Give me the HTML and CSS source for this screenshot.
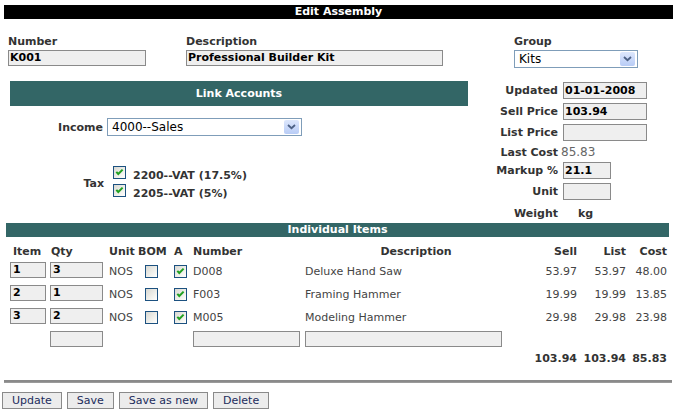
FILE: index.html
```html
<!DOCTYPE html>
<html>
<head>
<meta charset="utf-8">
<title>Edit Assembly</title>
<link rel="stylesheet" href="styles.css">
</head>
<body>
<div class="page">
  <div class="titlebar">Edit Assembly</div>

  <div class="head">
    <div class="field f-number">
      <div class="flabel">Number</div>
      <div class="box w-number">K001</div>
    </div>
    <div class="field f-desc">
      <div class="flabel">Description</div>
      <div class="box w-desc">Professional Builder Kit</div>
    </div>
    <div class="field f-group">
      <div class="flabel">Group</div>
      <div class="select w-group"><span>Kits</span><span class="arrow"><svg width="9" height="6" viewBox="0 0 9 6"><path d="M1 1l3.5 3.2L8 1" fill="none" stroke="#4d6185" stroke-width="1.8"/></svg></span></div>
    </div>
  </div>

  <div class="mid">
    <div class="left">
      <div class="bar">Link Accounts</div>
      <div class="income">
        <div class="lbl">Income</div>
        <div class="select w-income"><span>4000--Sales</span><span class="arrow"><svg width="9" height="6" viewBox="0 0 9 6"><path d="M1 1l3.5 3.2L8 1" fill="none" stroke="#4d6185" stroke-width="1.8"/></svg></span></div>
      </div>
      <div class="tax">
        <div class="lbl">Tax</div>
        <div class="tax-list">
          <div class="tax-line"><span class="cb"><svg width="11" height="11" viewBox="0 0 11 11"><path d="M2.3 4.8l2 2.2L8.6 2.6" fill="none" stroke="#21a121" stroke-width="2"/></svg></span><span class="tax-text">2200--VAT (17.5%)</span></div>
          <div class="tax-line"><span class="cb"><svg width="11" height="11" viewBox="0 0 11 11"><path d="M2.3 4.8l2 2.2L8.6 2.6" fill="none" stroke="#21a121" stroke-width="2"/></svg></span><span class="tax-text">2205--VAT (5%)</span></div>
        </div>
      </div>
    </div>

    <div class="right">
      <div class="rl">Updated</div><div class="rv"><div class="box rbox">01-01-2008</div></div>
      <div class="rl">Sell Price</div><div class="rv"><div class="box rbox">103.94</div></div>
      <div class="rl">List Price</div><div class="rv"><div class="box rbox"></div></div>
      <div class="rl rl-short">Last Cost</div><div class="rv rv-text">85.83</div>
      <div class="rl">Markup %</div><div class="rv"><div class="box rbox-s">21.1</div></div>
      <div class="rl">Unit</div><div class="rv"><div class="box rbox-s"></div></div>
      <div class="rl rl-w">Weight</div><div class="rv rv-w">kg</div>
    </div>
  </div>

  <div class="items">
    <div class="bar2">Individual Items</div>
    <div class="grid hrow">
      <div class="h-item">Item</div>
      <div class="h-qty">Qty</div>
      <div class="h-unit">Unit</div>
      <div class="h-bom">BOM</div>
      <div class="h-a">A</div>
      <div>Number</div>
      <div class="center">Description</div>
      <div class="num">Sell</div>
      <div class="num">List</div>
      <div class="num">Cost</div>
    </div>

    <div class="grid row">
      <div><div class="box ib-item">1</div></div>
      <div><div class="box ib-qty">3</div></div>
      <div class="t t-unit">NOS</div>
      <div class="cbcell"><span class="cb"></span></div>
      <div class="cbcell-a"><span class="cb"><svg width="11" height="11" viewBox="0 0 11 11"><path d="M2.3 4.8l2 2.2L8.6 2.6" fill="none" stroke="#21a121" stroke-width="2"/></svg></span></div>
      <div class="t">D008</div>
      <div class="t">Deluxe Hand Saw</div>
      <div class="t num">53.97</div>
      <div class="t num">53.97</div>
      <div class="t num">48.00</div>
    </div>

    <div class="grid row">
      <div><div class="box ib-item">2</div></div>
      <div><div class="box ib-qty">1</div></div>
      <div class="t t-unit">NOS</div>
      <div class="cbcell"><span class="cb"></span></div>
      <div class="cbcell-a"><span class="cb"><svg width="11" height="11" viewBox="0 0 11 11"><path d="M2.3 4.8l2 2.2L8.6 2.6" fill="none" stroke="#21a121" stroke-width="2"/></svg></span></div>
      <div class="t">F003</div>
      <div class="t">Framing Hammer</div>
      <div class="t num">19.99</div>
      <div class="t num">19.99</div>
      <div class="t num">13.85</div>
    </div>

    <div class="grid row">
      <div><div class="box ib-item">3</div></div>
      <div><div class="box ib-qty">2</div></div>
      <div class="t t-unit">NOS</div>
      <div class="cbcell"><span class="cb"></span></div>
      <div class="cbcell-a"><span class="cb"><svg width="11" height="11" viewBox="0 0 11 11"><path d="M2.3 4.8l2 2.2L8.6 2.6" fill="none" stroke="#21a121" stroke-width="2"/></svg></span></div>
      <div class="t">M005</div>
      <div class="t">Modeling Hammer</div>
      <div class="t num">29.98</div>
      <div class="t num">29.98</div>
      <div class="t num">23.98</div>
    </div>

    <div class="grid row">
      <div></div>
      <div><div class="box ib-qty"></div></div>
      <div></div>
      <div></div>
      <div></div>
      <div><div class="box ib-num"></div></div>
      <div><div class="box ib-desc"></div></div>
      <div></div>
      <div></div>
      <div></div>
    </div>

    <div class="grid totals">
      <div></div><div></div><div></div><div></div><div></div><div></div><div></div>
      <div class="num">103.94</div>
      <div class="num">103.94</div>
      <div class="num">85.83</div>
    </div>
  </div>

  <div class="hr"></div>

  <div class="btns">
    <button class="btn">Update</button>
    <button class="btn">Save</button>
    <button class="btn">Save as new</button>
    <button class="btn">Delete</button>
  </div>
</div>
</body>
</html>
```

FILE: styles.css
```css
body {
  margin: 0;
  background: #fff;
  font-family: "DejaVu Sans", Verdana, sans-serif;
  font-size: 11px;
  color: #333;
}

.page {
  width: 675px;
  padding-top: 5px;
}

.titlebar {
  margin: 0 2px 0 4px;
  height: 14px;
  line-height: 14px;
  background: #000;
  color: #fff;
  font-weight: bold;
  text-align: center;
}

/* header fields */
.head {
  display: flex;
  padding-top: 16px;
}
.flabel {
  font-weight: bold;
  line-height: 13px;
  height: 15px;
}
.f-number { margin-left: 8px; width: 178px; }
.f-desc { width: 328px; }

.box {
  box-sizing: border-box;
  height: 16px;
  border: 1px solid #8a8a8a;
  background: #efefef;
  color: #000;
  font-weight: bold;
  padding-left: 1px;
  line-height: 14px;
  white-space: nowrap;
  overflow: hidden;
}
.w-number { width: 138px; }
.w-desc { width: 257px; }

.select {
  box-sizing: border-box;
  height: 18px;
  border: 1px solid #7f9db9;
  background: #fff;
  color: #000;
  font-size: 12px;
  display: flex;
  align-items: center;
  justify-content: space-between;
  padding-left: 4px;
}
.arrow {
  box-sizing: border-box;
  width: 15px;
  height: 14px;
  margin-right: 2px;
  border-radius: 2px;
  background: linear-gradient(#dde7fc, #b8ccf6);
  display: flex;
  align-items: center;
  justify-content: center;
}
.w-group { width: 124px; }
.w-income { width: 195px; }

/* middle section */
.mid {
  display: flex;
  margin-top: 13px;
}
.left {
  margin-left: 10px;
  width: 458px;
}
.bar {
  height: 25px;
  line-height: 25px;
  background: #336666;
  color: #fff;
  font-weight: bold;
  text-align: center;
}
.income {
  display: flex;
  align-items: center;
  margin-top: 12px;
}
.lbl {
  font-weight: bold;
  text-align: right;
}
.income .lbl {
  width: 93px;
  margin-right: 4px;
}
.tax {
  display: flex;
  align-items: center;
  margin-top: 29px;
}
.tax .lbl {
  width: 94px;
  margin-right: 9px;
}
.tax-line {
  display: flex;
  align-items: flex-start;
  height: 18px;
}
.tax-line .cb {
  margin-top: 1px;
  margin-right: 7px;
}
.tax-text {
  font-weight: bold;
  line-height: 13px;
  padding-top: 4px;
}

.cb {
  box-sizing: border-box;
  display: flex;
  width: 13px;
  height: 13px;
  border: 1px solid #1c5180;
  background: linear-gradient(135deg, #d8d8d2 0%, #f4f4f0 70%, #fff 100%);
}

.right {
  width: 207px;
  height: 142px;
  display: grid;
  grid-template-columns: 90px auto;
  grid-template-rows: 21px 21px 21px 17px 21px 21px 20px;
  column-gap: 5px;
}
.rl {
  font-weight: bold;
  text-align: right;
  line-height: 19px;
}
.rl-short { line-height: 17px; }
.rv { padding-top: 1px; }
.rbox { width: 84px; height: 17px; line-height: 15px; }
.rbox-s { width: 48px; height: 17px; line-height: 15px; }
.rv-text {
  padding-top: 0;
  margin-left: -2px;
  font-size: 12px;
  line-height: 17px;
  color: #666;
}
.rl-w, .rv-w {
  padding-top: 4px;
  line-height: 13px;
  font-weight: bold;
}
.rv-w { padding-left: 15px; }

/* items */
.items {
  margin-left: 6px;
  width: 663px;
}
.bar2 {
  height: 14px;
  line-height: 14px;
  background: #336666;
  color: #fff;
  font-weight: bold;
  text-align: center;
}
.grid {
  display: grid;
  grid-template-columns: 40px 58px 28px 30px 27px 112px 222px 50px 49px 41px;
  margin-left: 4px;
}
.hrow {
  padding-top: 8px;
  line-height: 13px;
  font-weight: bold;
}
.h-item { padding-left: 3px; }
.h-qty { padding-left: 1px; }
.h-unit { padding-left: 1px; }
.h-bom { padding-left: 2px; white-space: nowrap; }
.h-a { padding-left: 8px; }
.center { text-align: center; }
.num { text-align: right; }

.row {
  height: 16px;
  margin-top: 4px;
  align-items: center;
}
.row + .row { margin-top: 7px; }
.t {
  color: #444;
  line-height: 13px;
  padding-top: 2px;
  white-space: nowrap;
}
.t-unit { padding-left: 1px; }
.cbcell {
  align-self: end;
  display: flex;
  justify-content: center;
}
.cbcell-a {
  align-self: end;
  display: flex;
  padding-left: 8px;
}
.ib-item { width: 36px; padding-left: 2px; }
.ib-qty { width: 53px; padding-left: 2px; }
.ib-num { width: 107px; }
.ib-desc { width: 197px; }

.totals {
  margin-top: 5px;
  line-height: 13px;
  font-weight: bold;
  color: #333;
}

.hr {
  box-sizing: border-box;
  margin: 15px 0 0 4px;
  width: 668px;
  height: 3px;
  background: #8a8a8a;
  border-bottom: 1px solid #9a9a9a;
}

.btns {
  display: flex;
  gap: 5px;
  margin: 9px 0 0 2px;
}
.btn {
  box-sizing: border-box;
  height: 17px;
  padding: 0 9px;
  border: 1px solid #8a8a8a;
  background: #ececec;
  color: #1c2c5c;
  font-family: "DejaVu Sans", Verdana, sans-serif;
  font-size: 11px;
  line-height: 15px;
}
```
